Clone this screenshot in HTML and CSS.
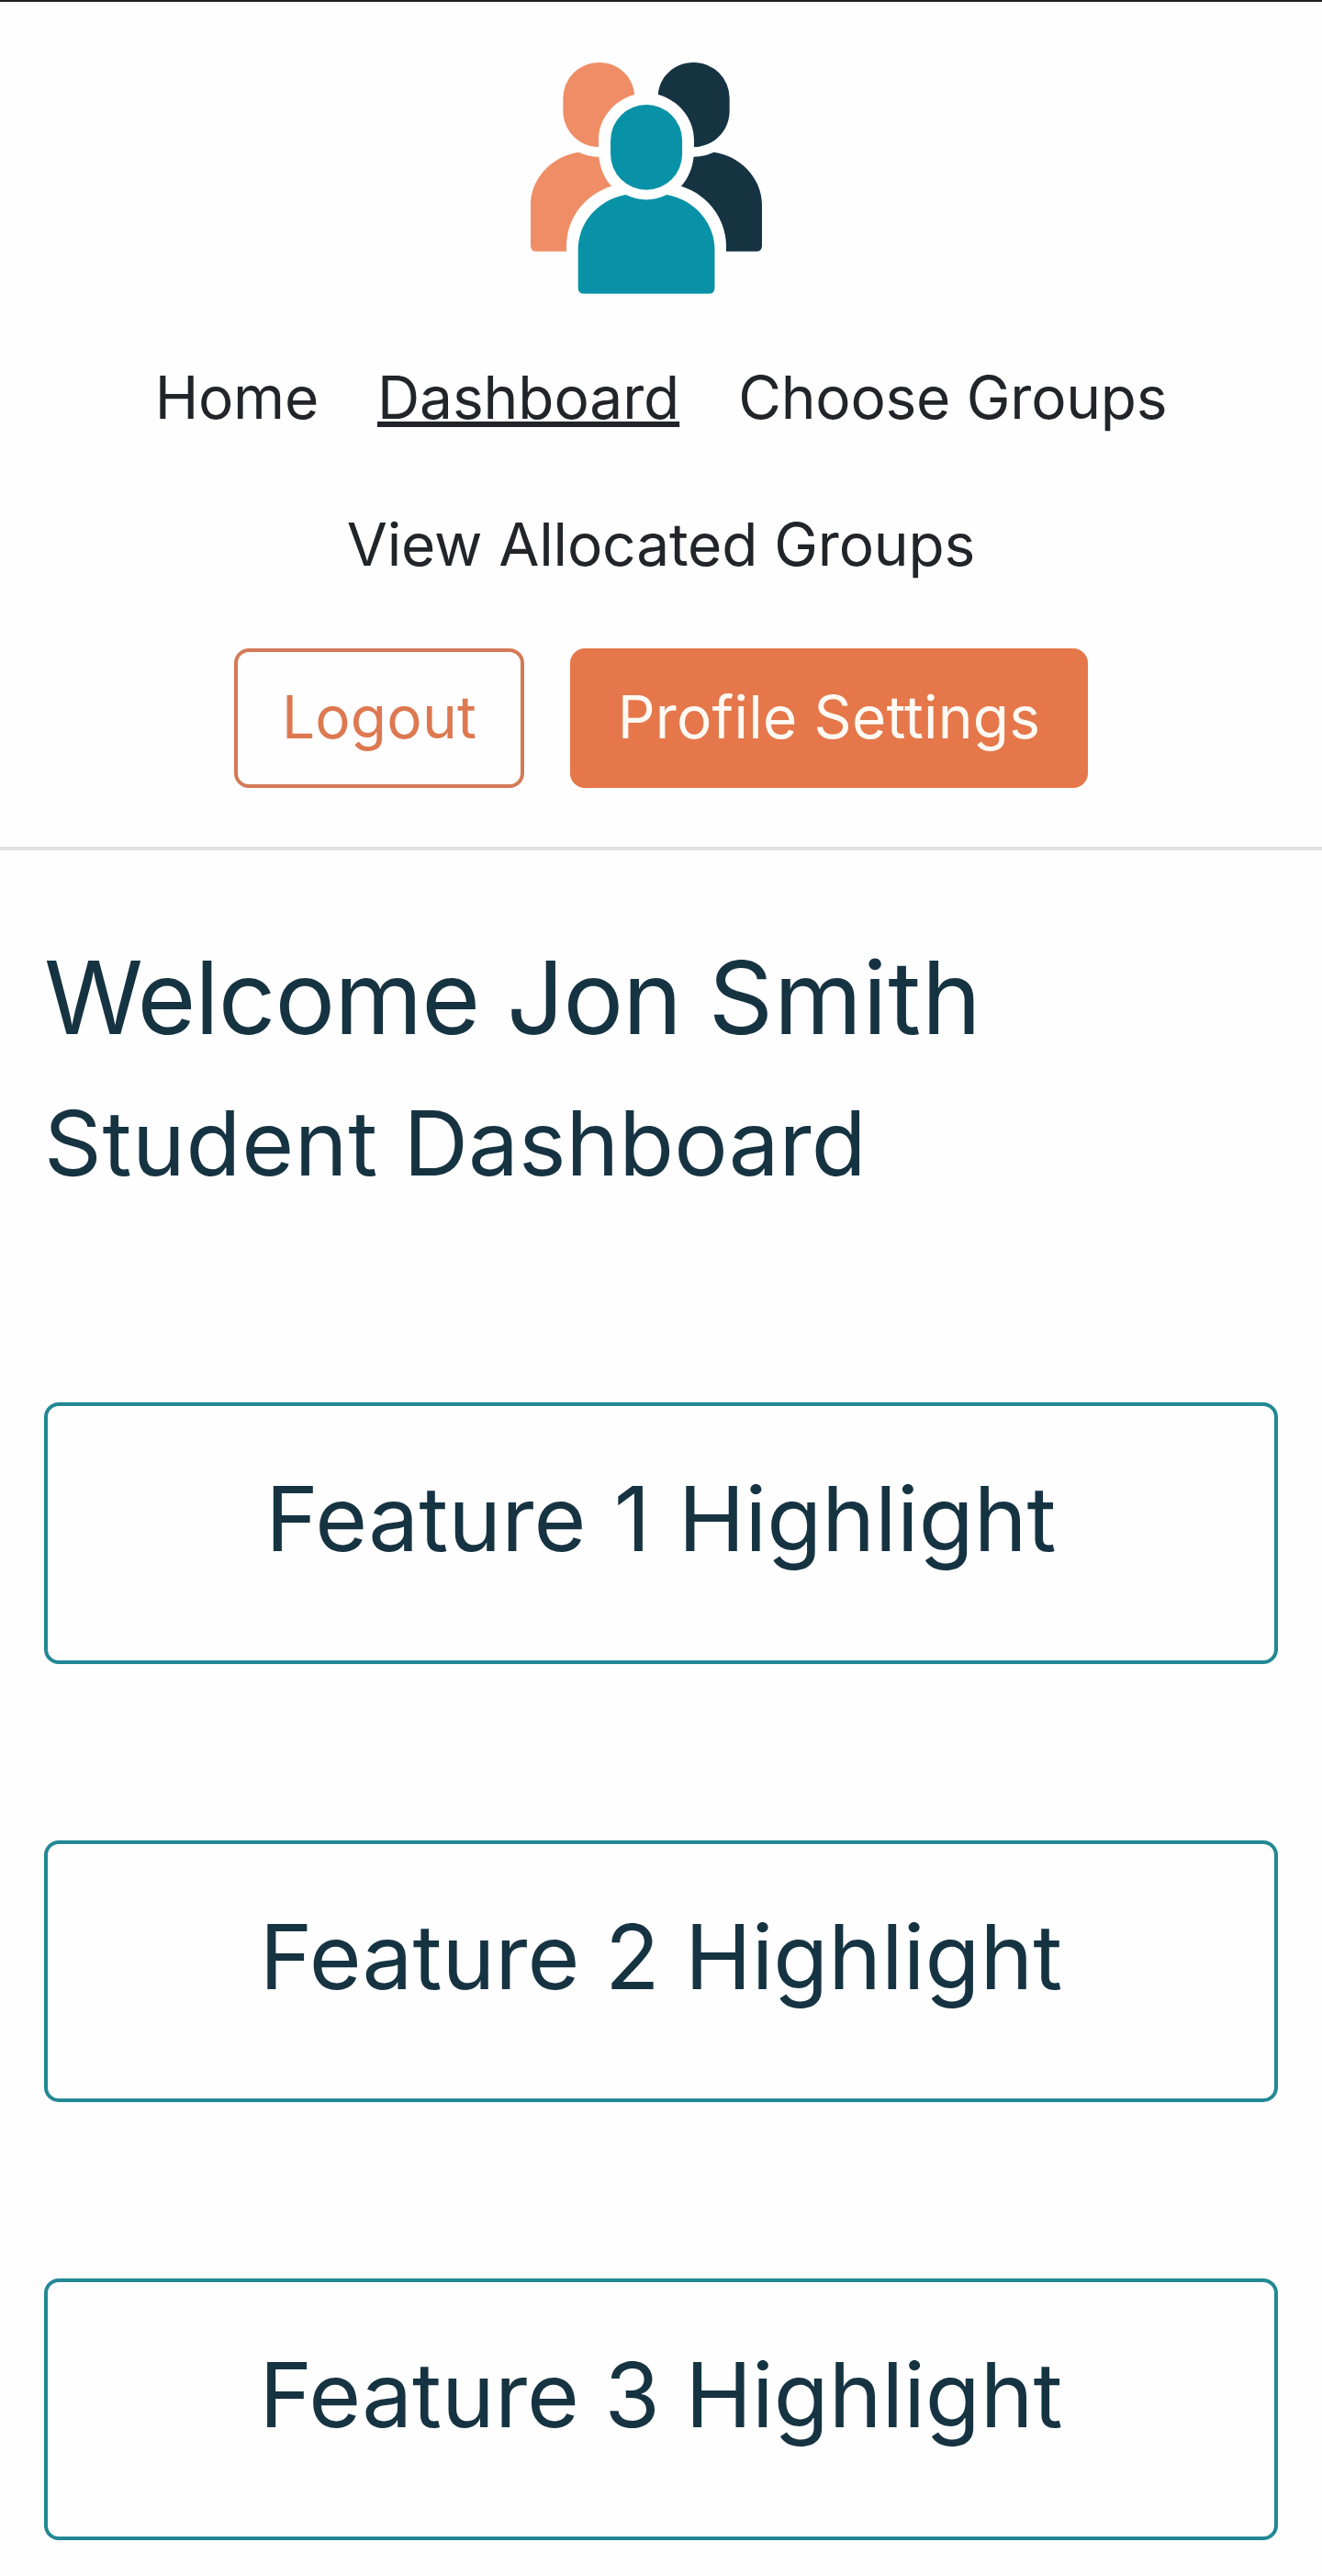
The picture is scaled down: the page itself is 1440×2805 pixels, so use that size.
FILE: index.html
```html
<!DOCTYPE html>
<html lang="en">
<head>
  <meta charset="utf-8">
  <title>Student Dashboard</title>
  <link rel="stylesheet" href="styles.css">
</head>
<body>
  <header class="header">
    <svg class="logo" viewBox="54 54 755.5 755.5" aria-label="Home">
      <defs>
        <g id="side-person">
          <path d="M160 170A117 116 0 0 1 277 54C341 54 390 102 393 159C325 178 276 238 276 306V330C212 330 160 277 160 213Z"/>
          <path d="M54 518C54 432 125 359 211 347Q242 362 277 362C281 400 295 432 318 458C232 485 171 562 171 655V671H73Q54 671 54 652Z"/>
        </g>
      </defs>
      <use href="#side-person" fill="#ef8e66"/>
      <use href="#side-person" fill="#163342" transform="translate(863.5 0) scale(-1 1)"/>
      <g fill="#0992a7">
        <rect x="315" y="192" width="234" height="278" rx="117"/>
        <path d="M209 790V665C209 576 276 502 365 486Q396 502 432 502Q468 502 498 486C588 502 655 576 655 665V790Q655 809 636 809H228Q209 809 209 790Z"/>
      </g>
    </svg>
    <nav class="nav">
      <a class="nav-link">Home</a>
      <a class="nav-link active">Dashboard</a>
      <a class="nav-link">Choose Groups</a>
      <a class="nav-link nav-link-wide">View Allocated Groups</a>
    </nav>
    <div class="actions">
      <button class="btn btn-outline">Logout</button>
      <button class="btn btn-solid">Profile Settings</button>
    </div>
  </header>
  <main class="main">
    <h1 class="title">Welcome Jon <span class="surname">Smith</span></h1>
    <h2 class="subtitle"><span class="role">Student</span> Dashboard</h2>
    <section class="features">
      <article class="card"><h2 class="card-title card-title-first">Feature 1 Highlight</h2></article>
      <article class="card"><h2 class="card-title">Feature 2 Highlight</h2></article>
      <article class="card"><h2 class="card-title">Feature 3 Highlight</h2></article>
    </section>
  </main>
</body>
</html>
```
FILE: styles.css
```css
* {
  box-sizing: border-box;
}

body {
  margin: 0;
  background: #fefefe;
  color: #212529;
  font-family: Inter, sans-serif;
  font-size: 64px;
  font-weight: 400;
  line-height: 96px;
}

.header {
  display: flex;
  flex-direction: column;
  align-items: center;
  height: 926px;
  padding-top: 66px;
  border-top: 2px solid #211e1f;
  border-bottom: 4px solid #e0e0e5;
}

.logo {
  display: block;
  width: 252px;
  height: 252px;
  margin-right: 32px;
}

.nav {
  display: flex;
  flex-wrap: wrap;
  justify-content: center;
  width: 1248px;
  margin-top: 33px;
}

.nav-link {
  padding: 32px;
  letter-spacing: -0.25px;
  white-space: nowrap;
}

.nav-link-wide {
  letter-spacing: -0.15px;
}

.nav-link.active {
  letter-spacing: -0.1px;
  text-decoration: underline;
  text-decoration-thickness: 6px;
}

.actions {
  display: flex;
  gap: 50px;
  margin-top: 33px;
}

.btn {
  height: 152px;
  padding: 23px 0 25px;
  border: 4px solid #e5774b;
  border-radius: 16px;
  font: inherit;
  letter-spacing: 0.2px;
  white-space: nowrap;
}

.btn-outline {
  width: 316px;
  background: transparent;
  color: #dd7851;
  border-color: #d47a58;
}

.btn-solid {
  width: 564px;
  background: #e5774b;
  color: #fffaf3;
}

.main {
  padding: 95px 48px 0;
  color: #163342;
}

.title,
.subtitle,
.card-title {
  margin: 0;
  font-weight: 400;
  line-height: 1.2;
}

.title {
  margin-bottom: 33px;
  font-size: 109.6px;
  letter-spacing: -1px;
}

.surname {
  letter-spacing: 0.9px;
}

.subtitle,
.card-title {
  font-size: 97.76px;
}

.role {
  letter-spacing: 0.7px;
}

.card-title-first {
  letter-spacing: 0.1px;
  word-spacing: 2.5px;
}

.features {
  display: flex;
  flex-direction: column;
  gap: 191.7px;
  margin-top: 224px;
}

.card {
  padding: 64px 64px 96px;
  border: 4px solid #228894;
  border-radius: 16px;
  text-align: center;
}
```
